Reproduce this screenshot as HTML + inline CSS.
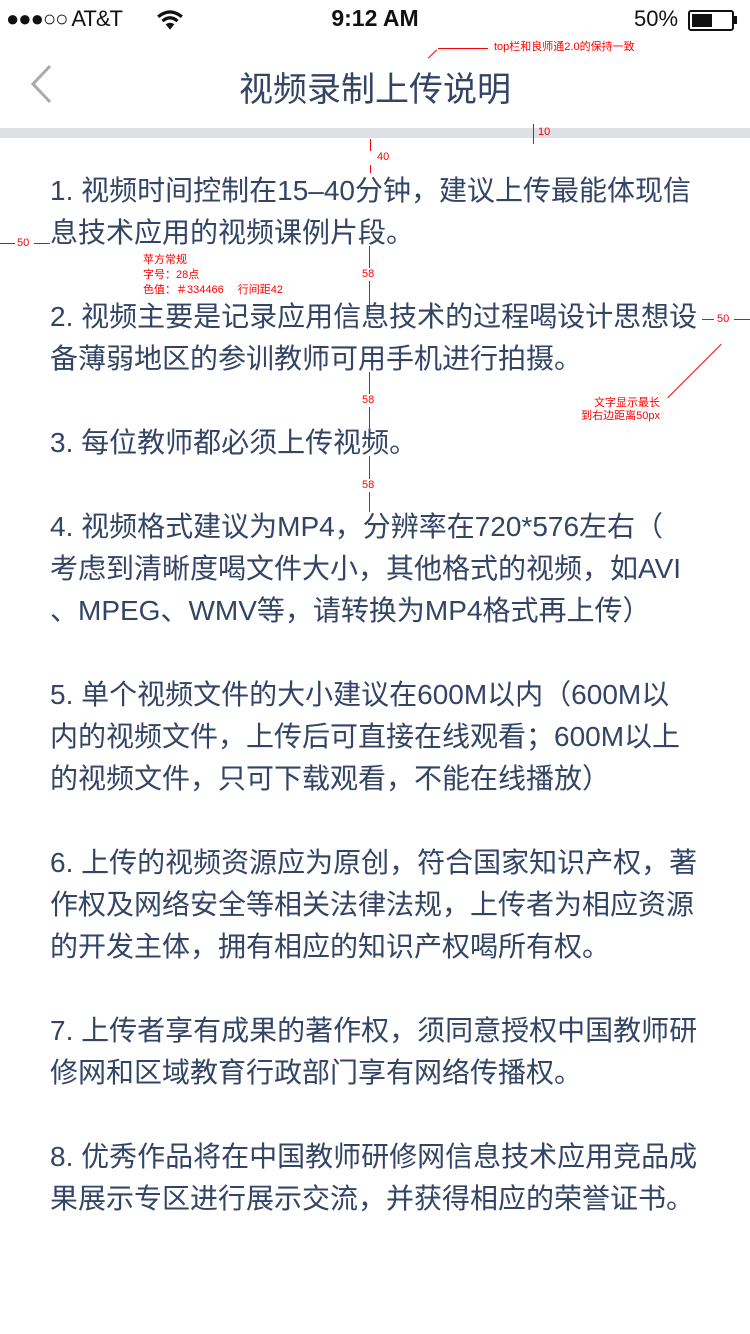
<!DOCTYPE html>
<html><head><meta charset="utf-8"><style>
*{margin:0;padding:0}
body{width:750px;height:1334px;position:relative;background:#fff;font-family:"Liberation Sans","Noto Sans CJK SC",sans-serif;overflow:hidden}
.a{position:absolute}
.red{color:#f00;font-size:11px;line-height:13px}
.txt{position:absolute;left:50px;top:169px;font-size:28px;line-height:42px;color:#334466;white-space:nowrap}
.rl{position:absolute;background:#f00}
</style></head><body>
<!-- status bar -->
<div class="a" style="left:6px;top:6px;font-size:22px;color:#111;letter-spacing:-1px">●●●○○ AT&amp;T</div>
<svg class="a" style="left:156px;top:9px" width="28" height="22" viewBox="0 0 26 20"><path d="M2 7Q13-2 24 7" stroke="#111" stroke-width="3" fill="none"/><path d="M6 11Q13 5 20 11" stroke="#111" stroke-width="3" fill="none"/><path d="M13 19L9 14Q13 11 17 14Z" fill="#111"/></svg>
<div class="a" style="left:0;width:750px;text-align:center;top:5px;font-size:23px;font-weight:bold;color:#111">9:12 AM</div>
<div class="a" style="left:634px;top:6px;font-size:22px;color:#111">50%</div>
<div class="a" style="left:688px;top:10px;width:42px;height:17px;border:2px solid #111;border-radius:3px"></div>
<div class="a" style="left:692px;top:14px;width:20px;height:13px;background:#111"></div>
<div class="a" style="left:734px;top:16px;width:3px;height:8px;background:#111"></div>
<!-- header -->
<svg class="a" style="left:28px;top:64px" width="26" height="40"><path d="M22 2L5 20L22 38" stroke="#aaa" stroke-width="3" fill="none"/></svg>
<div class="a" style="left:0;width:750px;text-align:center;top:62px;font-size:34px;color:#334466">视频录制上传说明</div>
<div class="a" style="left:0;top:128px;width:750px;height:10px;background:#dde0e4"></div>
<!-- annotations -->
<div class="a red" style="left:494px;top:41px">top栏和良师通2.0的保持一致</div>
<div class="rl" style="left:438px;top:48px;width:50px;height:1px"></div>
<div class="rl" style="left:432px;top:48px;width:1px;height:12px;transform:rotate(45deg)"></div>
<div class="a red" style="left:538px;top:126px">10</div>
<div class="rl" style="left:533px;top:124px;width:1px;height:20px"></div>
<div class="rl" style="left:370px;top:139px;width:1px;height:12px"></div>
<div class="a red" style="left:377px;top:151px">40</div>
<div class="rl" style="left:370px;top:165px;width:1px;height:8px"></div>
<div class="rl" style="left:0;top:243px;width:15px;height:1px"></div>
<div class="a red" style="left:17px;top:237px">50</div>
<div class="rl" style="left:34px;top:243px;width:16px;height:1px"></div>
<div class="a red" style="left:143px;top:253px;line-height:15px">苹方常规<br>字号：28点<br>色值：＃334466　 行间距42</div>
<div class="rl" style="left:369px;top:246px;width:1px;height:66px"></div>
<div class="a red" style="left:362px;top:268px;background:#fff">58</div>
<div class="rl" style="left:369px;top:372px;width:1px;height:56px"></div>
<div class="a red" style="left:362px;top:394px;background:#fff">58</div>
<div class="rl" style="left:369px;top:456px;width:1px;height:56px"></div>
<div class="a red" style="left:362px;top:479px;background:#fff">58</div>
<div class="rl" style="left:702px;top:319px;width:12px;height:1px"></div>
<div class="a red" style="left:717px;top:313px">50</div>
<div class="rl" style="left:734px;top:319px;width:16px;height:1px"></div>
<div class="rl" style="left:694px;top:333px;width:1px;height:76px;transform:rotate(45deg)"></div>
<div class="a red" style="left:560px;top:397px;text-align:right;width:100px">文字显示最长<br>到右边距离50px</div>
<!-- body text -->
<div class="txt" style="top:170px">1. 视频时间控制在15–40分钟，建议上传最能体现信<br>息技术应用的视频课例片段。<br><br>2. 视频主要是记录应用信息技术的过程喝设计思想设<br>备薄弱地区的参训教师可用手机进行拍摄。<br><br>3. 每位教师都必须上传视频。<br><br>4. 视频格式建议为MP4，分辨率在720*576左右（<br>考虑到清晰度喝文件大小，其他格式的视频，如AVI<br>、MPEG、WMV等，请转换为MP4格式再上传）<br><br>5. 单个视频文件的大小建议在600M以内（600M以<br>内的视频文件，上传后可直接在线观看；600M以上<br>的视频文件，只可下载观看，不能在线播放）<br><br>6. 上传的视频资源应为原创，符合国家知识产权，著<br>作权及网络安全等相关法律法规，上传者为相应资源<br>的开发主体，拥有相应的知识产权喝所有权。<br><br>7. 上传者享有成果的著作权，须同意授权中国教师研<br>修网和区域教育行政部门享有网络传播权。<br><br>8. 优秀作品将在中国教师研修网信息技术应用竞品成<br>果展示专区进行展示交流，并获得相应的荣誉证书。</div>
</body></html>
